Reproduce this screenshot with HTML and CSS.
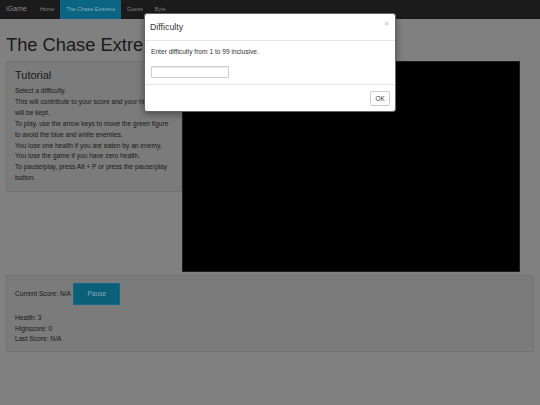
FILE: index.html
```html
<!DOCTYPE html>
<html lang="en">
<head>
<meta charset="utf-8">
<title>The Chase Extreme - iGame</title>
<link rel="stylesheet" href="styles.css">
</head>
<body>
<nav class="navbar">
  <a class="brand" href="#">iGame</a>
  <ul class="nav">
    <li><a href="#">Home</a></li>
    <li class="active"><a href="#">The Chase Extreme</a></li>
    <li><a href="#">Guess</a></li>
    <li><a href="#">Byte</a></li>
  </ul>
</nav>
<main class="container">
  <h1 class="title">The Chase Extreme</h1>
  <div class="game-row">
    <section class="well tutorial">
      <h3>Tutorial</h3>
      <p>Select a difficulty.</p>
      <p>This will contribute to your score and your highscore will be kept.</p>
      <p>To play, use the arrow keys to move the green figure to avoid the blue and white enemies.</p>
      <p>You lose one health if you are eaten by an enemy.</p>
      <p>You lose the game if you have zero health.</p>
      <p>To pause/play, press Alt + P or press the pause/play button.</p>
    </section>
    <div class="board"></div>
  </div>
  <section class="well stats">
    <p class="score-line">Current Score: <span>N/A</span> <button class="btn-pause" type="button">Pause</button></p>
    <p class="stat-lines">Health: 3<br>Highscore: 0<br>Last Score: N/A</p>
  </section>
</main>
<div class="dialog" role="dialog" aria-labelledby="dlg-title">
  <div class="dialog-header">
    <button class="close" type="button" aria-label="Close">&times;</button>
    <h4 class="dialog-title" id="dlg-title">Difficulty</h4>
  </div>
  <div class="dialog-body">
    <p>Enter difficulty from 1 to 99 inclusive.</p>
    <input class="field" type="text">
  </div>
  <div class="dialog-footer">
    <button class="btn-ok" type="button">OK</button>
  </div>
</div>
</body>
</html>
```

FILE: styles.css
```css
html, body {
  margin: 0;
  padding: 0;
}
/* page is shown dimmed behind the open dialog */
body {
  position: relative;
  background: #808080;
  color: #1a1a1a;
  font-family: "Liberation Sans", Arial, sans-serif;
  font-size: 6.63px;
  line-height: 10.9px;
  width: 540px;
  height: 405px;
  overflow: hidden;
}
.navbar {
  display: flex;
  height: 19px;
  background: #1b1b1b;
}
.brand {
  padding: 0 5.9px;
  font-size: 7.1px;
  line-height: 19px;
  color: #888888;
  text-decoration: none;
}
.nav {
  display: flex;
  list-style: none;
  margin: 0 0 0 1.3px;
  padding: 0;
}
.nav a {
  display: block;
  padding: 0 5.9px;
  font-size: 5.5px;
  line-height: 19px;
  color: #808080;
  text-decoration: none;
}
.nav .active a {
  background: #0b6582;
  color: #86aebd;
}
.container {
  padding: 0 6px;
}
.title {
  margin: 15.6px 0 6.3px;
  font-size: 18.3px;
  font-weight: normal;
  line-height: 20.1px;
  color: #1a1a1a;
}
.game-row {
  display: flex;
  align-items: flex-start;
}
.well {
  background: #7b7b7b;
  border: 1px solid #737373;
  border-radius: 2px;
  box-sizing: border-box;
}
.tutorial {
  width: 176px;
  padding: 7px 8px 7px;
}
.tutorial h3 {
  margin: 0 0 4px;
  font-size: 11px;
  font-weight: normal;
  line-height: 13px;
}
.tutorial p {
  margin: 0;
}
.board {
  width: 338px;
  height: 211px;
  background: #000000;
  box-sizing: border-box;
  border: 1px solid #1e1e1e;
}
.stats {
  margin-top: 3px;
  padding: 7px 8px 6px;
}
.stats p {
  margin: 0;
}
.score-line {
  margin-bottom: 8px !important;
}
.stat-lines {
  line-height: 10.6px;
}
.btn-pause {
  display: inline-block;
  margin: 0 0 0 1px;
  padding: 5px 13px;
  font-family: inherit;
  font-size: 6.63px;
  line-height: 10px;
  color: #84aaba;
  background: #0b5f79;
  border: 1px solid #136a86;
  border-radius: 0;
}
.dialog {
  position: absolute;
  left: 144px;
  top: 13px;
  width: 252px;
  box-sizing: border-box;
  background: #ffffff;
  border: 1px solid #666666;
  border-radius: 3px;
  box-shadow: 0 2px 7px rgba(0, 0, 0, 0.4);
  z-index: 20;
}
.dialog-header {
  padding: 6.6px 5px 6.5px;
  border-bottom: 1px solid #e5e5e5;
}
.dialog-title {
  margin: 0;
  font-size: 8.8px;
  font-weight: normal;
  line-height: 12.6px;
  color: #333333;
}
.close {
  float: right;
  margin: -3px 1px 0 0;
  padding: 0;
  background: none;
  border: 0;
  font-family: inherit;
  font-size: 8px;
  font-weight: bold;
  line-height: 12px;
  color: #cccccc;
}
.dialog-body {
  padding: 6.5px 5px 6px 6px;
  color: #333333;
}
.dialog-body p {
  margin: 0 0 8px;
}
.field {
  display: block;
  box-sizing: border-box;
  width: 78px;
  height: 12px;
  margin: 0;
  padding: 0 3px;
  border: 1px solid #cccccc;
  border-radius: 1px;
  box-shadow: inset 0 1px 1px rgba(0, 0, 0, 0.075);
  font-family: inherit;
  font-size: 6.63px;
}
.dialog-footer {
  display: flex;
  justify-content: flex-end;
  padding: 6px 5.3px 5px;
  border-top: 1px solid #e5e5e5;
}
.btn-ok {
  margin: 0;
  padding: 1.8px 4px;
  font-family: inherit;
  font-size: 6.4px;
  line-height: 9px;
  color: #333333;
  background: #ffffff;
  border: 1px solid #cccccc;
  border-radius: 2px;
}
```
